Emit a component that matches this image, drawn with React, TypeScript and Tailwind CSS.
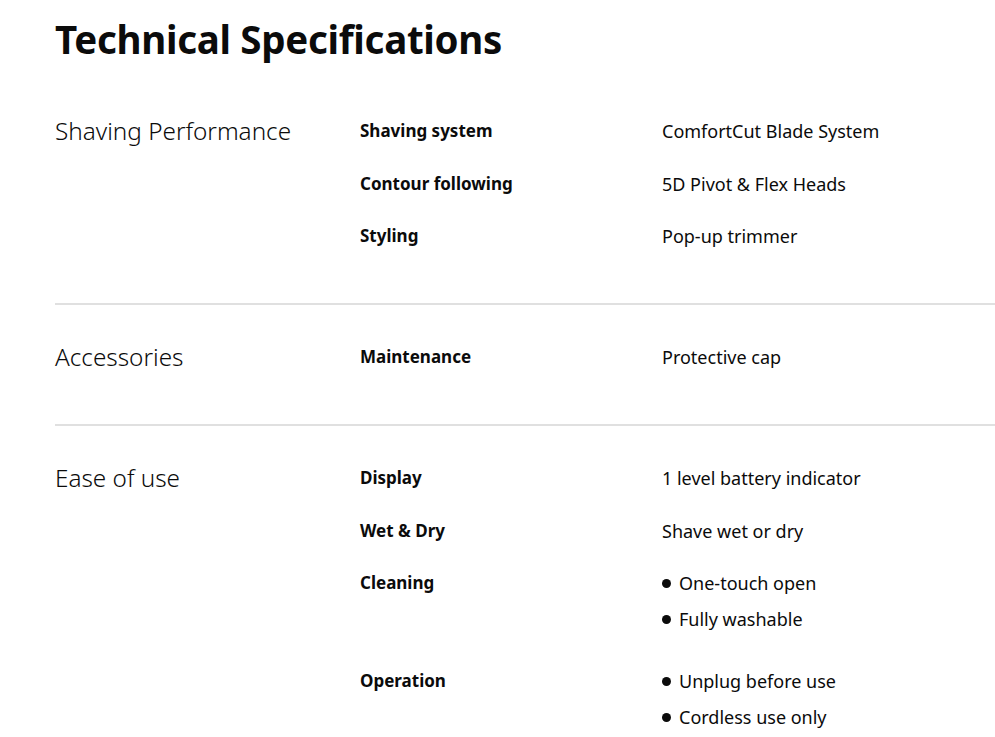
import React from "react";

type Row = { label: string; value?: string; list?: string[] };
type Section = { title: string; rows: Row[] };

const sections: Section[] = [
  {
    title: "Shaving Performance",
    rows: [
      { label: "Shaving system", value: "ComfortCut Blade System" },
      { label: "Contour following", value: "5D Pivot & Flex Heads" },
      { label: "Styling", value: "Pop-up trimmer" },
    ],
  },
  {
    title: "Accessories",
    rows: [{ label: "Maintenance", value: "Protective cap" }],
  },
  {
    title: "Ease of use",
    rows: [
      { label: "Display", value: "1 level battery indicator" },
      { label: "Wet & Dry", value: "Shave wet or dry" },
      { label: "Cleaning", list: ["One-touch open", "Fully washable"] },
      { label: "Operation", list: ["Unplug before use", "Cordless use only"] },
    ],
  },
];

export default function App() {
  return (
    <div
      className="min-h-[737px] w-[995px] overflow-hidden bg-white pl-[55px] text-[#0b0b0b]"
      style={{ fontFamily: '"Noto Sans", "Open Sans", sans-serif' }}
    >
      <h1 className="pt-[15px] text-[38.5px] font-bold leading-[48px] tracking-[-0.3px]">
        Technical Specifications
      </h1>
      <div className="mt-[56px]">
        {sections.map((s, i) => (
          <div
            key={s.title}
            className={
              "grid grid-cols-[305px_302px_1fr] " +
              (i > 0 ? "border-t-2 border-[#e0e0e0] pt-[40px] " : "") +
              "pb-[55px]"
            }
          >
            <div className="text-[24.3px] font-light leading-[24px]">{s.title}</div>
            <div className="col-span-2 flex flex-col gap-[28.5px]">
              {s.rows.map((r) => (
                <div key={r.label} className="grid grid-cols-[302px_1fr]">
                  <div className="text-[17px] font-bold leading-[24px]">{r.label}</div>
                  {r.value ? (
                    <div className="text-[18px] leading-[24px]">{r.value}</div>
                  ) : (
                    <ul className="mb-[9.5px] flex flex-col gap-[12px]">
                      {r.list!.map((li) => (
                        <li key={li} className="flex items-center text-[18px] leading-[24px]">
                          <span className="mr-[8px] inline-block h-[9px] w-[9px] rounded-full bg-[#0b0b0b]" />
                          {li}
                        </li>
                      ))}
                    </ul>
                  )}
                </div>
              ))}
            </div>
          </div>
        ))}
      </div>
    </div>
  );
}
